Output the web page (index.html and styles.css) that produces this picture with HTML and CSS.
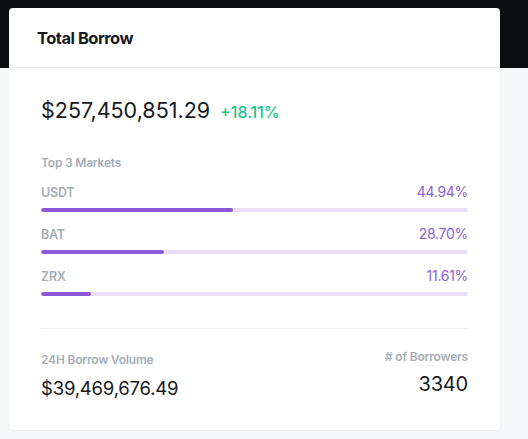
FILE: index.html
```html
<!DOCTYPE html>
<html>
<head>
<meta charset="utf-8">
<link rel="stylesheet" href="styles.css">
</head>
<body>
<div class="card">
  <div class="card-header"><h2 class="title">Total Borrow</h2></div>
  <div class="card-body">
    <div class="headline">
      <span class="total">$257,450,851.29</span>
      <span class="change">+18.11%</span>
    </div>
    <div class="section-label">Top 3 Markets</div>
    <div class="market">
      <div class="market-row"><span class="market-name">USDT</span><span class="market-pct">44.94%</span></div>
      <div class="bar"><div class="bar-fill" style="width:44.94%"></div></div>
    </div>
    <div class="market">
      <div class="market-row"><span class="market-name">BAT</span><span class="market-pct">28.70%</span></div>
      <div class="bar"><div class="bar-fill" style="width:28.70%"></div></div>
    </div>
    <div class="market">
      <div class="market-row"><span class="market-name">ZRX</span><span class="market-pct">11.61%</span></div>
      <div class="bar"><div class="bar-fill" style="width:11.61%"></div></div>
    </div>
    <div class="stats">
      <div class="stat">
        <div class="stat-label">24H Borrow Volume</div>
        <div class="stat-value">$39,469,676.49</div>
      </div>
      <div class="stat stat-right">
        <div class="stat-label">#&nbsp;of Borrowers</div>
        <div class="stat-value">3340</div>
      </div>
    </div>
  </div>
</div>
</body>
</html>
```

FILE: styles.css
```css
html, body {
  margin: 0;
  padding: 0;
}
body {
  width: 528px;
  height: 439px;
  overflow: hidden;
  background: linear-gradient(to bottom, #0d0e12 0, #0d0e12 68px, #f6f7f9 68px, #f6f7f9 100%);
  font-family: Inter, "Noto Sans", sans-serif;
  color: #1b1d21;
  padding-top: 8px;
  box-sizing: border-box;
}
.card {
  margin-left: 9px;
  width: 491px;
  height: 422px;
  background: #ffffff;
  border-radius: 4px;
  box-shadow: 0 1px 2px rgba(0,0,0,0.04);
}
.card-header {
  height: 60px;
  box-sizing: border-box;
  border-bottom: 1px solid #eceef1;
  padding: 20px 28px 0;
}
.title {
  margin: 0;
  font-size: 16.5px;
  font-weight: 700;
  line-height: 20px;
  letter-spacing: -0.5px;
  color: #17191d;
}
.card-body {
  padding: 26px 32px 0;
}
.headline {
  display: flex;
  align-items: baseline;
  gap: 10px;
  height: 32px;
}
.total {
  font-size: 21.5px;
  line-height: 32px;
  letter-spacing: 0;
  color: #17191d;
}
.change {
  font-size: 16px;
  color: #1ec48a;
  letter-spacing: 0;
  font-weight: 500;
}
.section-label {
  margin-top: 29px;
  height: 16px;
  font-size: 12px;
  font-weight: 600;
  line-height: 16px;
  color: #a6adb5;
  letter-spacing: -0.2px;
}
.market {
  margin-top: 13px;
}
.market + .market {
  margin-top: 14px;
}
.market-row {
  display: flex;
  justify-content: space-between;
  align-items: baseline;
  height: 16px;
  line-height: 16px;
}
.market-name {
  font-size: 12.5px;
  font-weight: 600;
  color: #a6adb5;
  letter-spacing: -0.2px;
}
.market-pct {
  font-size: 14px;
  color: #8a63d2;
  letter-spacing: -0.3px;
}
.bar {
  margin-top: 8px;
  height: 4px;
  border-radius: 2px;
  background: #e8def8;
  overflow: hidden;
}
.bar-fill {
  height: 100%;
  border-radius: 2px;
  background: #8b59d8;
}
.stats {
  margin-top: 32px;
  border-top: 1px solid #eceef1;
  padding-top: 23px;
  display: flex;
  justify-content: space-between;
}
.stat-label {
  font-size: 12px;
  font-weight: 600;
  line-height: 16px;
  height: 16px;
  color: #a6adb5;
  letter-spacing: -0.2px;
}
.stat-value {
  margin-top: 8px;
  font-size: 18.5px;
  line-height: 24px;
  letter-spacing: -0.2px;
  color: #17191d;
}
.stat-right {
  text-align: right;
  margin-top: -3px;
}
.stat-right .stat-value {
  margin-top: 7px;
  font-size: 20px;
}
```
